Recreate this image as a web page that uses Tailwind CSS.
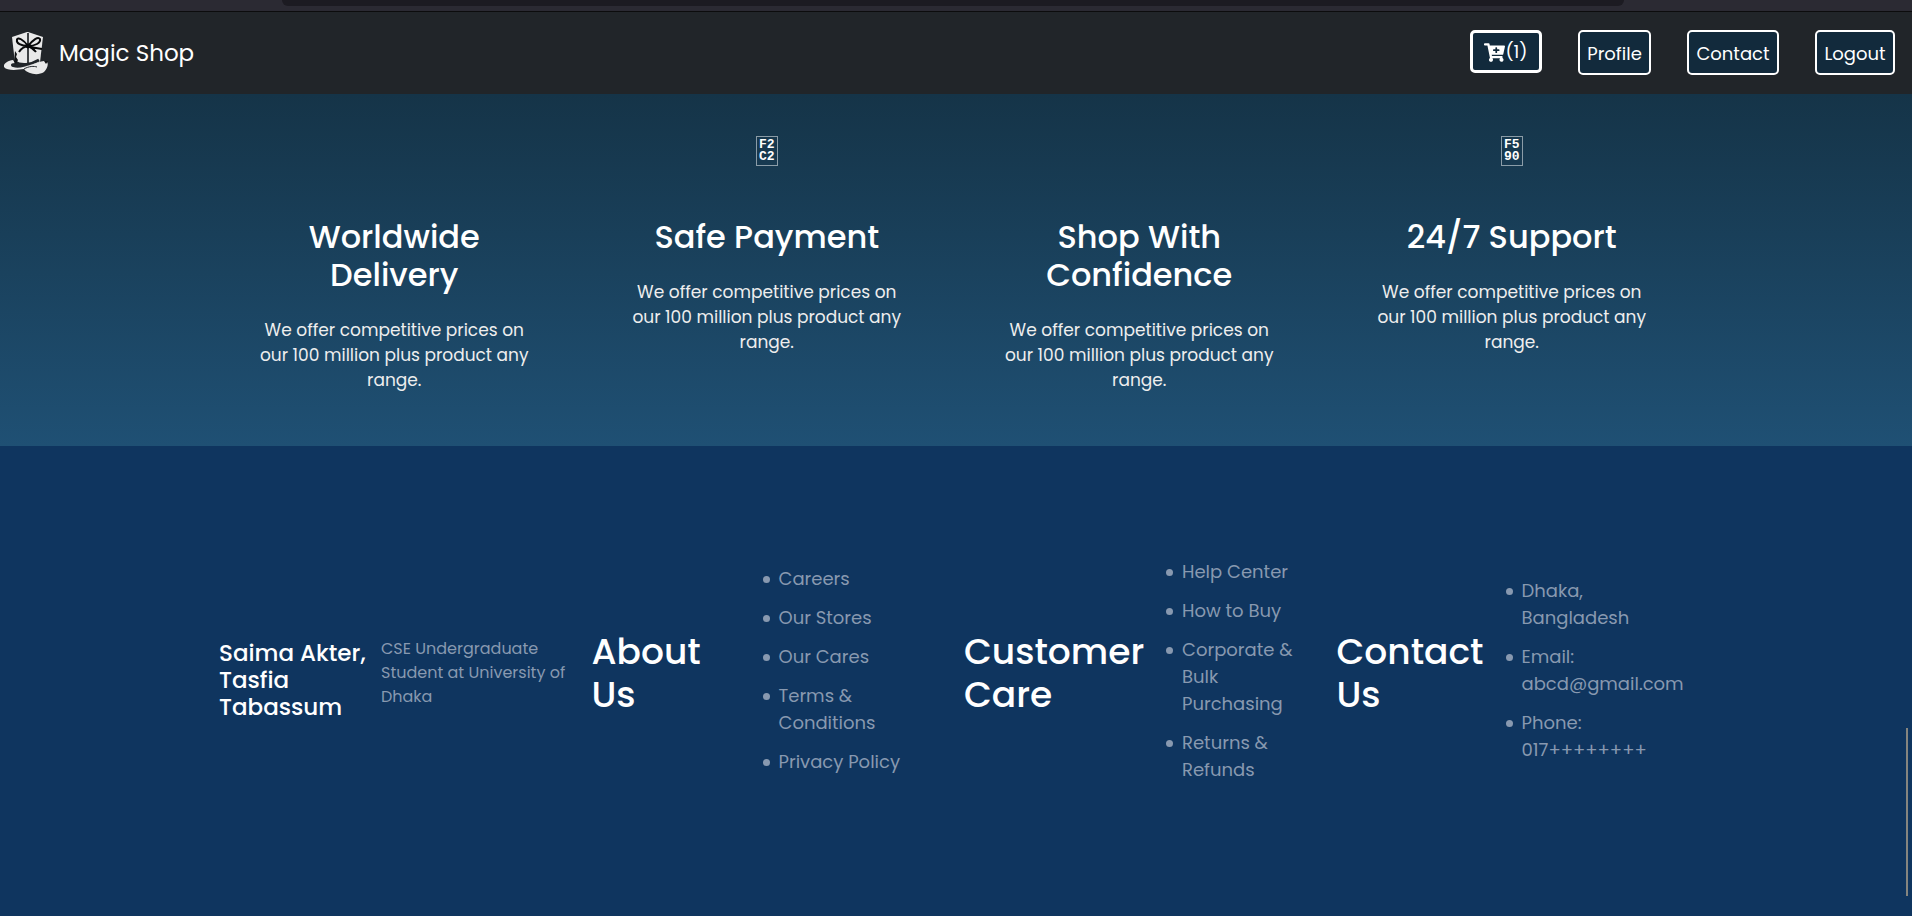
<!DOCTYPE html>
<html lang="en">
<head>
<meta charset="utf-8">
<meta name="viewport" content="width=device-width, initial-scale=1">
<title>Magic Shop</title>
<script src="https://cdn.jsdelivr.net/npm/@tailwindcss/browser@4"></script>
</head>
<body class="relative flex min-h-screen flex-col overflow-x-hidden bg-[#0f355f] font-['Poppins','Inter',sans-serif] text-white">
  <div class="flex h-3 shrink-0 items-start border-b border-[#0c0c0d] bg-[#2b2a33] pr-72 pl-[282px]">
    <div class="h-[6px] flex-1 rounded-b-md bg-[#1c1b22]"></div>
  </div>

  <header class="flex h-[82px] shrink-0 items-start justify-between bg-[#212529] pt-[18px] pr-[17px] pl-1">
    <a href="#" class="flex items-center gap-[11px] text-[23px] leading-[46px]">
      <svg class="h-11 w-11" viewBox="0 0 44 44" aria-hidden="true">
        <path d="M8 6 L23 1 L24 1 L39 6 L36 31 Q24 37 11 32 Z" fill="#e9e9e9"/>
        <path d="M11 31 C17 35 27 34 35 29" stroke="#212529" stroke-width="3" fill="none"/>
        <path d="M9 29 C3 30 -1 33 0 36 C3 40 13 39 20 38 C24 43 34 45 40 41 C45 36 45 29 40 30 C31 31 18 39 9 36 C6 35 6 32 11 32 Z" fill="#e9e9e9"/>
        <path d="M24 2 L24 32" stroke="#15181b" stroke-width="1.6" fill="none"/>
        <path d="M20 38 C25 35 30 35 33 36" stroke="#212529" stroke-width="1" fill="none"/>
        <path d="M11 20 l2 3 -1 3 2 3 -2 4 -2 -2 Z M40 30 l4 0 -2 3 Z" fill="#101214"/>
        <path d="M24 15 C20 9 13 5 13 9 C12 12 17 15 24 15 C29 9 34 5 36 8 C37 12 31 15 24 15 Q18 16 15 21 M24 15 Q29 17 32 21 M26 16 L38 18" stroke="#08090a" stroke-width="2" fill="none"/>
        <circle cx="24" cy="15" r="2.4" fill="#08090a"/>
      </svg>
      <span>Magic Shop</span>
    </a>
    <nav class="flex items-start gap-9 text-lg leading-[26px]">
      <a href="#" aria-label="Cart, 1 item" class="flex h-[43px] w-[72px] items-center justify-center rounded-[5px] border-3 border-white bg-[#122a3c] pt-px">
        <svg class="h-[19px] w-[21px]" viewBox="0 0 576 512" fill="currentColor" aria-hidden="true"><path d="M504.717 320H211.572l6.545 32h268.418c15.401 0 26.816 14.301 23.403 29.319l-5.517 24.276C523.112 414.668 536 433.828 536 456c0 31.202-25.519 56.444-56.824 55.994-29.823-.429-54.35-24.631-55.155-54.447-.44-16.287 6.085-31.049 16.803-41.548H231.176C241.553 426.165 248 440.326 248 456c0 31.813-26.528 57.431-58.67 55.938-28.54-1.325-51.751-24.385-53.251-52.917-1.158-22.034 10.436-41.455 28.051-51.586L93.883 64H24C10.745 64 0 53.255 0 40V24C0 10.745 10.745 0 24 0h102.529c11.401 0 21.228 8.021 23.513 19.19L159.208 64H551.99c15.401 0 26.816 14.301 23.403 29.319l-47.273 208C525.637 312.246 515.923 320 504.717 320zM408 168h-48v-40c0-8.837-7.163-16-16-16h-16c-8.837 0-16 7.163-16 16v40h-48c-8.837 0-16 7.163-16 16v16c0 8.837 7.163 16 16 16h48v40c0 8.837 7.163 16 16 16h16c8.837 0 16-7.163 16-16v-40h48c8.837 0 16-7.163 16-16v-16c0-8.837-7.163-16-16-16z"/></svg>
        <span>(1)</span>
      </a>
      <a href="#" class="flex h-[45px] w-[73px] items-center justify-center rounded-[5px] border-2 border-white bg-[#122a3c] pt-0.5">Profile</a>
      <a href="#" class="flex h-[45px] w-[92px] items-center justify-center rounded-[5px] border-2 border-white bg-[#122a3c] pt-0.5">Contact</a>
      <a href="#" class="flex h-[45px] w-20 items-center justify-center rounded-[5px] border-2 border-white bg-[#122a3c] pt-0.5">Logout</a>
    </nav>
  </header>

  <main class="shrink-0 bg-linear-to-b from-[#153448] to-[#1f5074] pt-[42px] pr-[214px] pb-[53px] pl-[208px]">
    <div class="grid grid-cols-4">
      <section class="flex flex-col items-center text-center">
        <div class="h-[30px]"></div>
        <h2 class="mt-[52px] w-70 text-[32px] leading-[38px] font-medium">Worldwide Delivery</h2>
        <p class="mt-6 w-70 text-[17px] leading-[25px] text-[#eeeeee]">We offer competitive prices on our 100 million plus product any range.</p>
      </section>
      <section class="flex flex-col items-center text-center">
        <div class="flex h-[30px] w-[22px] flex-col items-center justify-center border border-white/50 font-['Liberation_Mono',monospace] text-[13px] leading-3 font-bold"><span>F2</span><span>C2</span></div>
        <h2 class="mt-[52px] w-70 text-[32px] leading-[38px] font-medium">Safe Payment</h2>
        <p class="mt-6 w-70 text-[17px] leading-[25px] text-[#eeeeee]">We offer competitive prices on our 100 million plus product any range.</p>
      </section>
      <section class="flex flex-col items-center text-center">
        <div class="h-[30px]"></div>
        <h2 class="mt-[52px] w-70 text-[32px] leading-[38px] font-medium">Shop With Confidence</h2>
        <p class="mt-6 w-70 text-[17px] leading-[25px] text-[#eeeeee]">We offer competitive prices on our 100 million plus product any range.</p>
      </section>
      <section class="flex flex-col items-center text-center">
        <div class="flex h-[30px] w-[22px] flex-col items-center justify-center border border-white/50 font-['Liberation_Mono',monospace] text-[13px] leading-3 font-bold"><span>F5</span><span>90</span></div>
        <h2 class="mt-[52px] w-70 text-[32px] leading-[38px] font-medium">24/7 Support</h2>
        <p class="mt-6 w-70 text-[17px] leading-[25px] text-[#eeeeee]">We offer competitive prices on our 100 million plus product any range.</p>
      </section>
    </div>
  </main>

  <footer class="flex flex-1 items-center bg-[#0f355f] pr-[215px] pl-[207px] [&_li]:relative [&_li]:before:absolute [&_li]:before:top-[11px] [&_li]:before:-left-4 [&_li]:before:size-[7px] [&_li]:before:rounded-full [&_li]:before:bg-current [&_li]:before:content-['']">
    <div class="grid w-full grid-cols-4 text-lg leading-[27px] text-[#8899b0]">
      <section class="flex items-center pl-3">
        <h3 class="mb-0.5 w-[162px] shrink-0 text-[23px] leading-[27px] font-medium text-white">Saima Akter,<br>Tasfia<br>Tabassum</h3>
        <p class="mb-4 w-48 shrink-0 text-base leading-6">CSE Undergraduate Student at University of Dhaka</p>
      </section>
      <section class="flex items-center pl-3">
        <h3 class="mb-4 w-[187px] shrink-0 text-4xl leading-[43px] font-medium text-white">About<br>Us</h3>
        <ul class="mb-[22px] flex w-32 shrink-0 flex-col gap-3">
          <li>Careers</li><li>Our Stores</li><li>Our Cares</li><li>Terms &amp; Conditions</li><li class="whitespace-nowrap">Privacy Policy</li>
        </ul>
      </section>
      <section class="flex items-center pl-3">
        <h3 class="mb-4 w-[218px] shrink-0 text-4xl leading-[43px] font-medium text-white">Customer<br>Care</h3>
        <ul class="mb-[22px] flex w-32 shrink-0 flex-col gap-3">
          <li>Help Center</li><li>How to Buy</li><li>Corporate &amp;<br>Bulk<br>Purchasing</li><li>Returns &amp;<br>Refunds</li>
        </ul>
      </section>
      <section class="flex items-center pl-3">
        <h3 class="mb-4 w-[185px] shrink-0 text-4xl leading-[43px] font-medium text-white">Contact<br>Us</h3>
        <ul class="mb-[22px] flex w-44 shrink-0 flex-col gap-3">
          <li>Dhaka,<br>Bangladesh</li><li>Email:<br>abcd@gmail.com</li><li>Phone:<br>017++++++++</li>
        </ul>
      </section>
    </div>
  </footer>

  <div class="absolute right-1 bottom-5 h-42 w-[2px] bg-[#85857f]"></div>
</body>
</html>
